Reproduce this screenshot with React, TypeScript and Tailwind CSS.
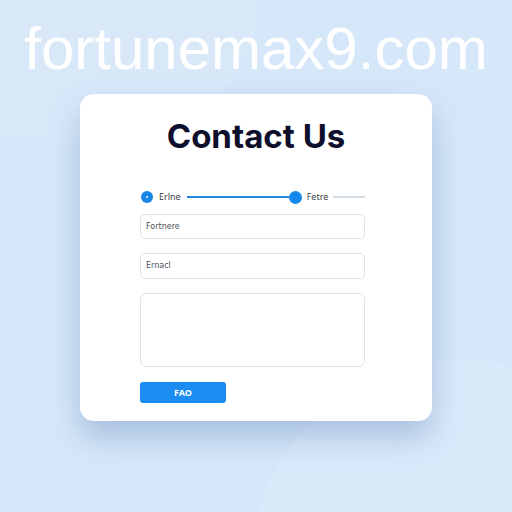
import React from "react";

export default function App() {
  return (
    <div className="relative w-[512px] h-[512px] overflow-hidden bg-[#d6e7f9] flex flex-col items-center">
      {/* soft background shapes */}
      <div className="absolute left-[250px] top-[360px] w-[420px] h-[420px] rounded-full bg-[#dbeafb] opacity-70" />
      <div className="absolute left-[-120px] top-[-160px] w-[380px] h-[300px] rounded-full bg-[#dbe9f9] opacity-60" />

      <h1
        className="relative mt-[19px] text-[60px] leading-[60px] text-white tracking-[0px]"
        style={{ fontFamily: '"Liberation Sans", Arial, sans-serif' }}
      >
        fortunemax9.com
      </h1>

      <div className="relative mt-[15px] w-[352px] h-[327px] bg-white rounded-[14px] shadow-[0_16px_30px_rgba(80,120,170,0.35)] flex flex-col">
        <h2
          className="mt-[22px] text-center text-[33px] leading-[40px] font-bold text-[#0e0f2c]"
          style={{ fontFamily: 'Inter, "Noto Sans", sans-serif' }}
        >
          Contact Us
        </h2>

        <div
          className="ml-[61px] mt-[34px] w-[224px] h-[14px] flex items-center"
          style={{ fontFamily: '"Noto Sans", "DejaVu Sans", sans-serif' }}
        >
          <div className="w-[12px] h-[12px] rounded-full bg-[#1787e6] flex items-center justify-center">
            <div className="w-[2px] h-[2px] rounded-full bg-white" />
          </div>
          <span className="ml-[6px] text-[9px] text-[#3a3f4a]">Erlne</span>
          <div className="ml-[6px] w-[102px] h-[2px] bg-[#1d86df]" />
          <div className="w-[13px] h-[13px] rounded-full bg-[#1789ea]" />
          <span className="ml-[5px] text-[9px] text-[#3a3f4a]">Fetre</span>
          <div className="ml-[5px] flex-1 h-[2px] bg-[#d3dde8]" />
        </div>

        <div
          className="ml-[60px] mt-[10px] w-[225px] flex flex-col"
          style={{ fontFamily: '"DejaVu Sans", "Noto Sans", sans-serif' }}
        >
          <div className="h-[25px] border border-[#dde2e8] rounded-[5px] flex items-center px-[5px] text-[8px] text-[#4a4f58]">
            Fortnere
          </div>
          <div className="mt-[14px] h-[26px] border border-[#dde2e8] rounded-[5px] flex items-center px-[5px] text-[8px] text-[#4a4f58]">
            Ernacl
          </div>
          <div className="mt-[14px] h-[74px] border border-[#dde2e8] rounded-[6px]" />
          <button
            className="mt-[15px] w-[86px] h-[21px] rounded-[3px] bg-[#1a8cf2] text-white text-[9px] font-bold flex items-center justify-center"
            style={{ fontFamily: '"Noto Sans", sans-serif' }}
          >
            FAO
          </button>
        </div>
      </div>
    </div>
  );
}
